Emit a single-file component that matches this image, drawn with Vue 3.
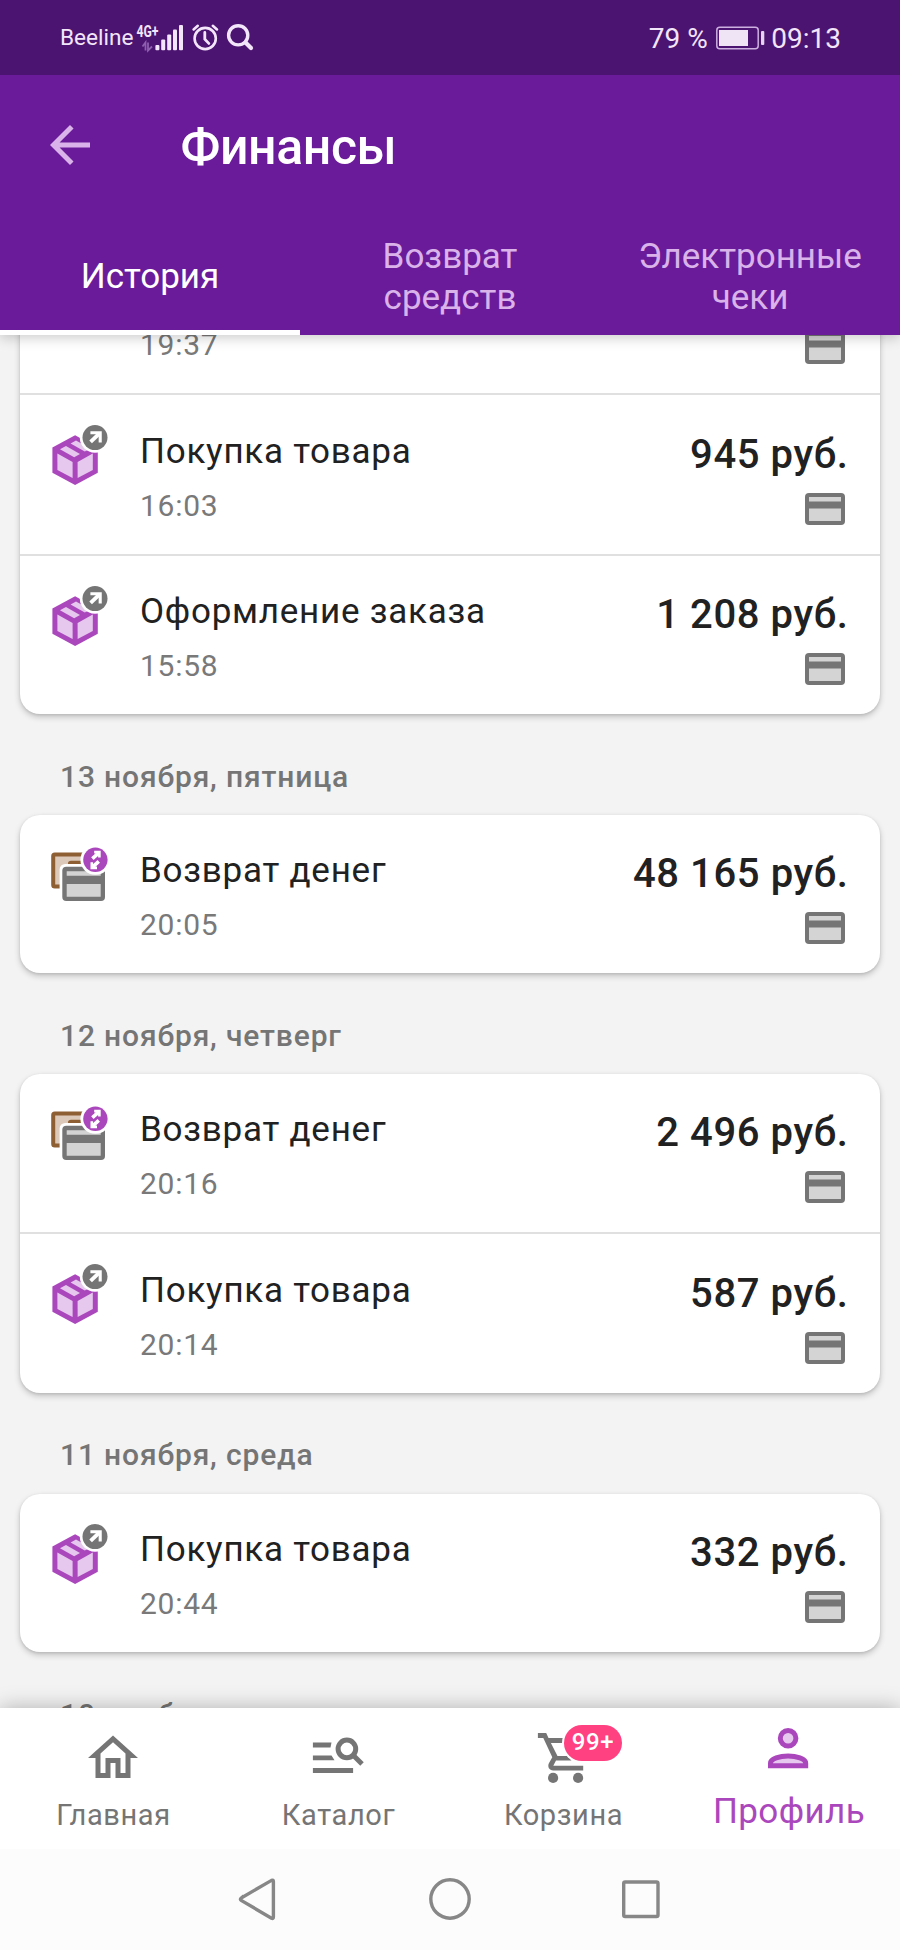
<script setup>
const tabs = [
  { label: 'История', active: true },
  { label: 'Возврат средств' },
  { label: 'Электронные чеки' },
]

const groups = [
  {
    continued: true,
    rows: [
      { time: '19:37' },
      { kind: 'order', title: 'Покупка товара', time: '16:03', sum: '945 руб.' },
      { kind: 'order', title: 'Оформление заказа', time: '15:58', sum: '1 208 руб.' },
    ],
  },
  {
    date: '13 ноября, пятница',
    rows: [{ kind: 'refund', title: 'Возврат денег', time: '20:05', sum: '48 165 руб.' }],
  },
  {
    date: '12 ноября, четверг',
    rows: [
      { kind: 'refund', title: 'Возврат денег', time: '20:16', sum: '2 496 руб.' },
      { kind: 'order', title: 'Покупка товара', time: '20:14', sum: '587 руб.' },
    ],
  },
  {
    date: '11 ноября, среда',
    rows: [{ kind: 'order', title: 'Покупка товара', time: '20:44', sum: '332 руб.' }],
  },
  { date: '10 ноября', rows: [] },
]
</script>

<template>
  <div class="screen">
    <header class="top">
      <div class="status">
        <span class="carrier">Beeline</span>
        <svg class="status-icons" width="126" height="36" viewBox="130 20 126 36">
          <text x="136.5" y="36.5" class="net" textLength="22" lengthAdjust="spacingAndGlyphs">4G+</text>
          <g fill="none" stroke="#8d5fae" stroke-width="1.8">
            <path d="M142.5 46.5l3-4v8M148 42.5v8l4-4" />
          </g>
          <g fill="#f3e5fa">
            <rect x="155.4" y="45" width="4" height="5.3" rx="1" />
            <rect x="161.2" y="39.5" width="4" height="10.8" rx="1" />
            <rect x="167.2" y="34.5" width="4" height="15.8" rx="1" />
            <rect x="173" y="29.5" width="4" height="20.8" rx="1" />
            <rect x="179" y="25" width="4" height="25.3" rx="1" />
          </g>
          <g fill="none" stroke="#f3e5fa" stroke-linecap="round">
            <circle cx="205.2" cy="38.5" r="10.6" stroke-width="2.6" />
            <path d="M204.8 32.5v6.7l4 4.2" stroke-width="2.8" />
            <path d="M193.6 29.4l4.2-3.6M212.8 25.8l4.2 3.6" stroke-width="2.6" />
            <circle cx="238.2" cy="35.3" r="9.6" stroke-width="3.4" />
            <path d="M245.5 42.5l5.5 5.5" stroke-width="4.2" />
          </g>
        </svg>
        <span class="status-gap"></span>
        <span class="clock">79 %</span>
        <svg class="battery" width="49" height="24" viewBox="0 0 49 24">
          <rect x=".8" y="1.3" width="41.4" height="21.4" rx="3" fill="none" stroke="#cdb0df" stroke-width="1.5" />
          <rect x="3" y="4" width="29" height="16" fill="#efe4f5" />
          <rect x="45" y="5" width="3.3" height="14" rx="1" fill="#e6d3f0" />
        </svg>
        <span class="clock">09:13</span>
      </div>
      <div class="appbar">
        <svg width="60" height="60" viewBox="0 0 24 24" fill="#d9b3ea">
          <path d="M20 11H7.83l5.59-5.59L12 4l-8 8 8 8 1.41-1.41L7.83 13H20v-2z" />
        </svg>
        <h1>Финансы</h1>
      </div>
      <nav class="tabs">
        <div v-for="t in tabs" :key="t.label" class="tab" :class="{ active: t.active }">
          <span>{{ t.label }}</span>
        </div>
      </nav>
    </header>

    <main class="list">
      <section v-for="(g, i) in groups" :key="i" class="group">
        <h2 v-if="g.date">{{ g.date }}</h2>
        <div v-if="g.rows.length" class="card" :class="{ continued: g.continued }">
          <article v-for="(r, j) in g.rows" :key="j" class="row">
            <div class="pic">
              <svg v-if="r.kind === 'order'" width="60" height="70" viewBox="50 420 60 70">
                <path d="M75.1 435.2L97.8 447.6V472.8L75.1 485L52.4 472.8V447.6z" fill="#ab47bc" />
                <g fill="#e6c8ee">
                  <path d="M57.4 453.6L72.6 462V478L57.4 470z" />
                  <path d="M92.8 453.6L77.6 462V478L92.8 470z" />
                  <path d="M60 449.2L66 446L80 454.1L74.2 457.3z" />
                  <path d="M70.6 443.4L76 440.4L90.4 448.4L84.8 451.6z" />
                </g>
                <circle cx="95" cy="437.6" r="15.2" fill="#fff" />
                <circle cx="95" cy="437.6" r="12.5" fill="#757575" />
                <g fill="none" stroke="#fff">
                  <path d="M90.4 432.7H100.2V442.6" stroke-width="3.1" />
                  <path d="M90.6 441.8L99.4 433.5" stroke-width="3.8" />
                </g>
              </svg>
              <svg v-else-if="r.kind === 'refund'" width="60" height="70" viewBox="50 840 60 70">
                <rect x="53.2" y="854.4" width="43" height="32" rx="1.5" fill="#dcc9ba" stroke="#8f5f34" stroke-width="4" />
                <path d="M68 866v-2.5q0-2.8 3-2.8h14v6z" fill="#8f5f34" />
                <rect x="59.6" y="864" width="48" height="40" rx="5.5" fill="#fff" />
                <rect x="62.3" y="866.7" width="42.7" height="34.3" rx="4" fill="#757575" />
                <path d="M66.7 871.2h34v4.6h-34zM66.7 884h34v12.7h-34z" fill="#d3d3d3" />
                <circle cx="95.4" cy="859.8" r="15" fill="#fff" />
                <circle cx="95.4" cy="859.8" r="12.2" fill="#ab47bc" />
                <g fill="none" stroke="#fff">
                  <path d="M94.2 852.1H99.4V857.6M97 867.9H91.8V862.2" stroke-width="2.6" />
                  <path d="M92.4 858.6L98.8 852.8M98.8 861.4L92.4 867.2" stroke-width="3.6" />
                </g>
              </svg>
            </div>
            <div class="info">
              <div class="title">{{ r.title }}</div>
              <div class="time">{{ r.time }}</div>
            </div>
            <div class="pay">
              <div class="sum">{{ r.sum }}</div>
              <svg width="40" height="32" viewBox="0 0 40 32">
                <rect width="40" height="32" rx="4" fill="#757575" />
                <path d="M4 4h32v4.4H4zM4 15.6h32V28H4z" fill="#d4d4d4" />
              </svg>
            </div>
          </article>
        </div>
      </section>
    </main>

    <footer class="bottom">
      <div class="item">
        <svg width="60" height="60" viewBox="0 0 24 24" fill="#757575">
          <path d="M12 5.69l5 4.5V18h-2v-6H9v6H7v-7.81l5-4.5M12 3L2 12h3v8h6v-6h2v6h6v-8h3L12 3z" />
        </svg>
        <span>Главная</span>
      </div>
      <div class="item">
        <svg width="60" height="60" viewBox="307.5 1728.5 60 60" fill="#757575">
          <path d="M312.4 1743h18.6l-1 5h-17.6zM312.4 1756h18.6l3 4.8h-21.6zM312.4 1768.4h40.2v5h-40.2z" />
          <circle cx="346.4" cy="1749.4" r="8.8" fill="none" stroke="#757575" stroke-width="5" />
          <path d="M352.5 1755.5l9 9" stroke="#757575" stroke-width="5" />
        </svg>
        <span>Каталог</span>
      </div>
      <div class="item">
        <div class="cart">
          <svg width="60" height="60" viewBox="532.5 1728.5 60 60" fill="#757575">
            <path d="M537.4 1733.4h8.3l2.3 5.2h20v4.8h-17.6l6.6 13h10l4 4.6h-15.5l-2.7 5.3h29.9v4.8h-30c-4 0-6-4-4.3-7.3l3.4-6-9-19.4h-5.4z" />
            <circle cx="552.6" cy="1778.4" r="5.1" />
            <circle cx="577.6" cy="1778.4" r="5.1" />
          </svg>
          <span class="badge">99+</span>
        </div>
        <span>Корзина</span>
      </div>
      <div class="item active">
        <svg width="60" height="60" viewBox="757.5 1723 60 60" fill="#e6c8ee" stroke="#ab47bc" stroke-width="5">
          <circle cx="787.6" cy="1738.2" r="7.8" />
          <path d="M770 1765.8v-2.6c0-4.4 9.4-7.2 17.6-7.2s17.6 2.8 17.6 7.2v2.6z" />
        </svg>
        <span>Профиль</span>
      </div>
    </footer>

    <div class="system">
      <svg width="41" height="44" viewBox="238 1877 41 44">
        <path d="M241.2 1898l30.3-17.6q1.9-.9 1.9 1.2v35.4q0 2.1-1.9 1.2l-30.3-17.8q-1.6-1.2 0-2.4z" />
      </svg>
      <svg width="44" height="44" viewBox="428 1877 44 44"><circle cx="450" cy="1899" r="19.2" /></svg>
      <svg width="40" height="44" viewBox="621 1877 40 44"><rect x="623.7" y="1882" width="34.3" height="34.5" rx="1.5" /></svg>
    </div>
  </div>
</template>

<style>
body {
  margin: 0;
}
</style>

<style scoped>
.screen {
  width: 900px;
  height: 1950px;
  display: flex;
  flex-direction: column;
  overflow: hidden;
  background: #f3f3f3;
  font-family: Roboto, "Noto Sans", sans-serif;
}
svg {
  display: block;
  flex: none;
}
.top {
  flex: none;
  position: relative;
  z-index: 2;
  background: #6a1b99;
  box-shadow: 0 3px 12px rgba(0, 0, 0, 0.2);
}
.status {
  box-sizing: border-box;
  height: 75px;
  padding: 0 59px 0 60px;
  display: flex;
  align-items: center;
  background: #4b1470;
  color: #f3e5fa;
}
.carrier {
  width: 70px;
  font-size: 22.6px;
  line-height: 28px;
  white-space: nowrap;
}
.net {
  font-size: 16px;
  font-weight: 700;
  fill: #f3e5fa;
}
.status-gap {
  flex: 1;
}
.clock {
  font-size: 28px;
  line-height: 34px;
  padding-top: 2px;
}
.battery {
  margin: 0 6.5px 0 8px;
}
.appbar {
  box-sizing: border-box;
  height: 143px;
  padding: 0 40px 3px;
  display: flex;
  align-items: center;
}
h1 {
  margin: 4px 0 0 80.5px;
  color: #fff;
  font-size: 50px;
  line-height: 59px;
  font-weight: 500;
  letter-spacing: -0.4px;
}
.tabs {
  height: 117px;
  display: grid;
  grid-template-columns: repeat(3, 1fr);
}
.tab {
  box-sizing: border-box;
  padding: 5px 20px 0;
  display: flex;
  align-items: center;
  justify-content: center;
  text-align: center;
  color: #d9b3ea;
  font-size: 35px;
  line-height: 41px;
  border-bottom: 5px solid transparent;
}
.tab.active {
  color: #fff;
  border-bottom-color: #fff;
}
.list {
  flex: 1;
  min-height: 0;
  overflow: hidden;
}
.group {
  padding: 0 20px;
}
h2 {
  margin: 0;
  box-sizing: border-box;
  height: 100.7px;
  padding: 44.5px 40px 0;
  color: #757575;
  font-size: 30px;
  line-height: 35px;
  font-weight: 500;
  letter-spacing: 0.85px;
}
.card {
  border-radius: 20px;
  background: #fff;
  box-shadow: 0 3px 6px rgba(0, 0, 0, 0.2), 0 1px 3px rgba(0, 0, 0, 0.1);
}
.card.continued {
  margin-top: -100.5px;
}
.row {
  box-sizing: border-box;
  height: 158.5px;
  padding: 0 30px;
  display: flex;
}
.row + .row {
  height: 160.5px;
  border-top: 2.5px solid #e0e0e0;
}
.pic {
  width: 90px;
  padding-top: 25px;
}
.info {
  flex: 1;
  padding-top: 35.5px;
}
.title {
  height: 41px;
  margin-bottom: 16px;
  color: #212121;
  font-size: 35px;
  line-height: 41px;
  letter-spacing: 0.75px;
}
.time {
  color: #797979;
  font-size: 30px;
  line-height: 35px;
  letter-spacing: 0.75px;
}
.pay {
  padding-top: 35.5px;
  display: flex;
  flex-direction: column;
  align-items: flex-end;
}
.sum {
  height: 47px;
  margin: 0 1.5px 15px 0;
  color: #212121;
  font-size: 40px;
  line-height: 47px;
  font-weight: 500;
  letter-spacing: 0.6px;
}
.pay svg {
  margin-right: 5px;
}
.bottom {
  flex: none;
  position: relative;
  z-index: 2;
  height: 141px;
  display: grid;
  grid-template-columns: repeat(4, 1fr);
  background: #fff;
  box-shadow: 0 0 20px rgba(0, 0, 0, 0.28);
}
.item {
  padding-top: 20px;
  display: flex;
  flex-direction: column;
  align-items: center;
  gap: 10px;
  color: #757575;
  font-size: 29px;
  line-height: 35px;
  letter-spacing: 0.6px;
}
.item > span {
  padding-left: 2px;
}
.item.active {
  padding-top: 15px;
  gap: 8px;
  color: #ab47bc;
  font-size: 35px;
  line-height: 41px;
  letter-spacing: 0.4px;
}
.item.active > span {
  padding-left: 3px;
}
.cart {
  position: relative;
}
.badge {
  position: absolute;
  left: 31.5px;
  top: -3px;
  width: 58px;
  height: 36px;
  border-radius: 18px;
  background: #ff4081;
  box-shadow: 0 0 0 2px #fff;
  color: #fff;
  font-size: 24px;
  line-height: 34px;
  font-weight: 500;
  text-align: center;
}
.system {
  flex: none;
  position: relative;
  z-index: 3;
  box-sizing: border-box;
  height: 101px;
  padding: 28px 239px 0 238px;
  display: flex;
  justify-content: space-between;
  background: #fcfcfc;
}
.system svg {
  fill: none;
  stroke: #878787;
  stroke-width: 3.4;
}
</style>
